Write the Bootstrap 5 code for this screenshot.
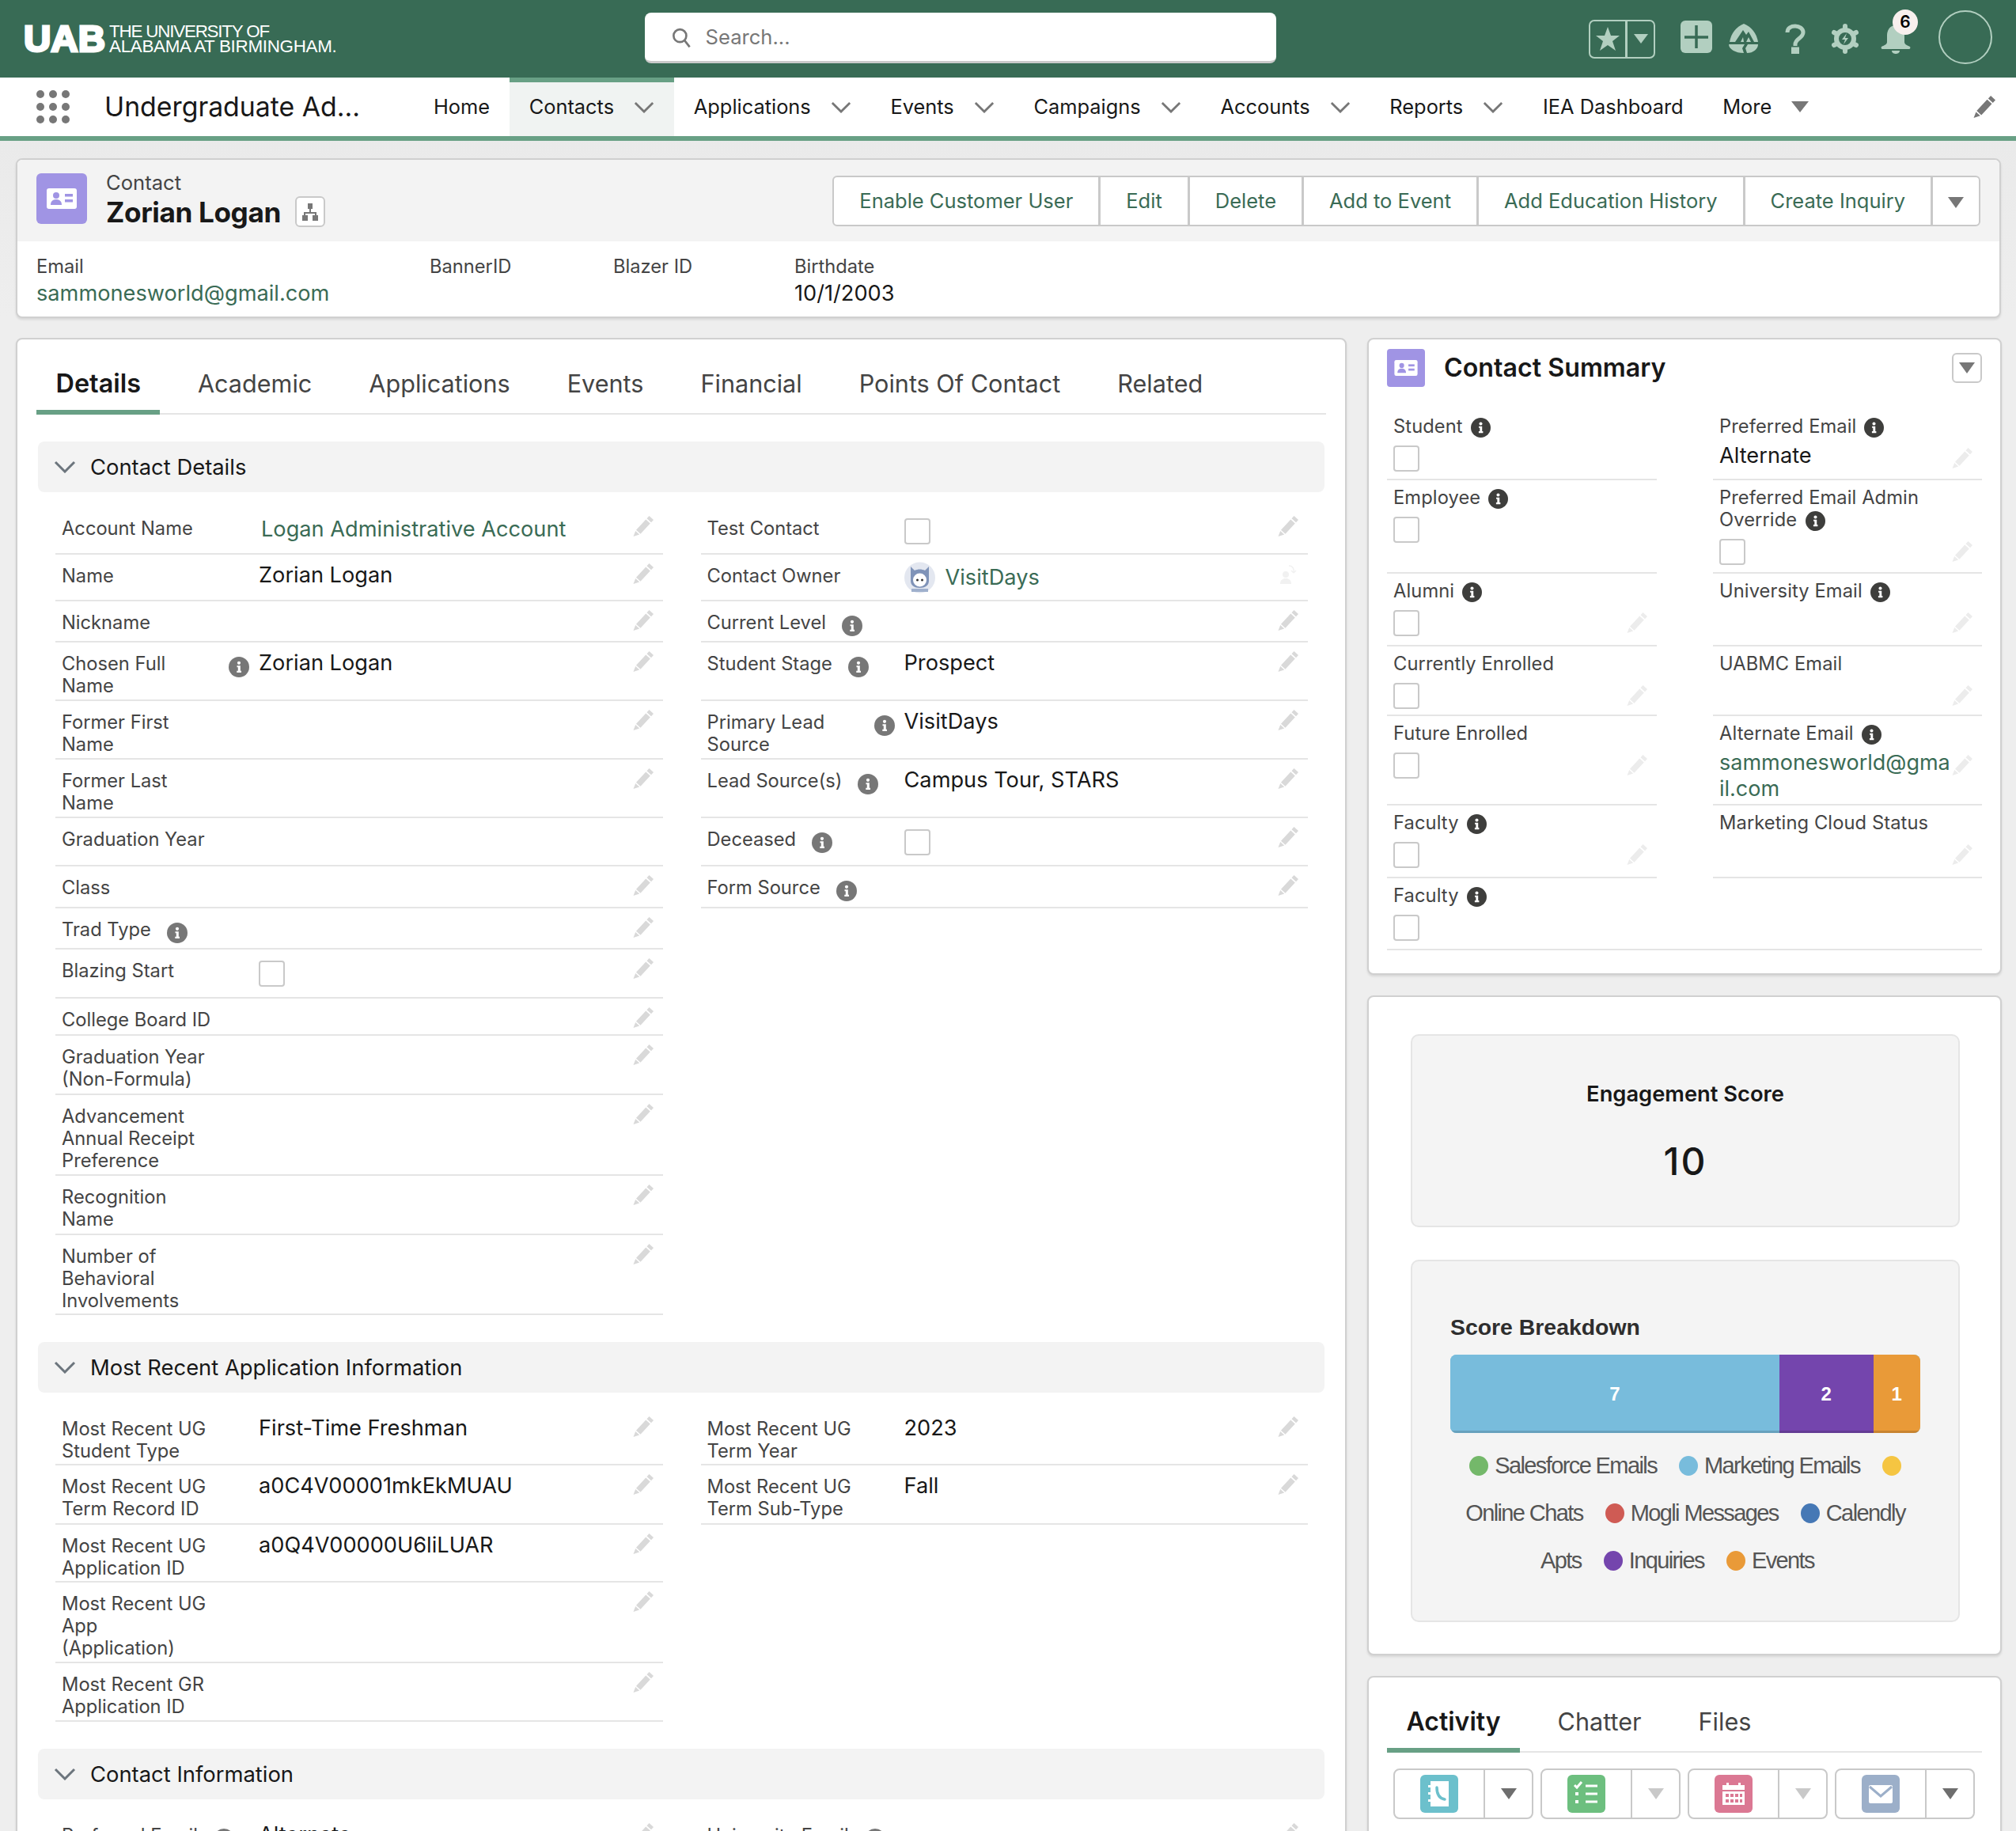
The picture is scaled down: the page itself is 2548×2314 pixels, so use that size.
<!doctype html>
<html lang="en">
<head>
<meta charset="utf-8">
<title>Zorian Logan | Contact</title>
<link href="https://cdn.jsdelivr.net/npm/bootstrap@5.3.0/dist/css/bootstrap.min.css" rel="stylesheet">
<style>
html,body{height:100vh;overflow:hidden}
body{font-family:Inter,"Liberation Sans",sans-serif;font-size:23.7px;line-height:28px;color:#181818;background:linear-gradient(#d6d6d6 0,#e8e8e8 60px,#eeeeee 400px)}
a{color:#3a6b55;text-decoration:none}
.topbar{height:98px;background:#386b55;padding:0 30px 0 0}
.logo-mark{margin-left:29px;width:106px;height:38px;flex:none;overflow:visible}
.logo-text{color:#fff;font-family:"Liberation Sans",sans-serif;font-size:22.4px;line-height:19.5px;margin-left:3px;width:677px;letter-spacing:-.3px}
.logo-text span{letter-spacing:-1.2px}
.srch{width:798px;height:64px;background:#fff;border-radius:8px;border:2px solid #c9c9c9;border-width:0 0 3px;padding:3px 0 0 34px;gap:18px;margin-bottom:3px}
.srch input{border:0;padding:0;font-size:25.6px;box-shadow:none!important;background:transparent}
.srch input::placeholder{color:#777}
.tools{margin-left:auto;height:98px}
.fav{width:84px;height:49px;border:2px solid #b2cfc0;border-radius:7px;margin-right:32px}
.fav>span{height:100%}
.fav>span:first-child{width:47px;border-right:3px solid #b2cfc0}
.fav>span:last-child{flex:1}
.plusb{margin:0 21px 5px 0}
.qmark{margin:0 33px}
.bellwrap{position:relative;width:38px;height:38px;margin:0 35px 0 28px}
.notif{position:absolute;left:15px;top:-18px;width:32px;height:32px;border-radius:50%;background:#f8f0ee;color:#000;font-weight:600;font-size:21px;line-height:32px;text-align:center}
.avat{width:68px;height:68px;border:2px solid #b2cfc0;border-radius:50%;flex:none;margin-bottom:4px}
.appbar{height:80px;background:#fff;border-bottom:6px solid #68a085}
.waffle{margin-left:46px;width:42px;display:grid;grid-template-columns:repeat(3,10px);gap:6px;flex:none}
.waffle i{width:10px;height:10px;border-radius:50%;background:#777;display:block}
.apptitle{margin-left:44px;width:391px;font-size:33.8px;line-height:44px;flex:none;white-space:nowrap}
.appnav .nav-link{color:#181818;font-size:25.4px;line-height:28px;height:74px;padding:0 24.5px 0 25px;display:flex;align-items:center;gap:25.2px;white-space:nowrap}
.appnav .nav-link svg{color:#777}
.appnav .nav-link.on{background:#f0f3f2;border-top:6px solid #68a085;padding-bottom:6px}
.apppen{margin-left:auto;margin-right:26px;color:#777}
.shell{padding:22px 19px 0 20px}
.hcard,.ccard{background:#fff;border:2px solid #d0d0d0;border-radius:8px;box-shadow:0 2px 3px rgba(0,0,0,.1)}
.hhead{height:103px;background:#f3f3f3;border-radius:6px 6px 0 0;padding:0 24px}
.tile{width:64px;height:64px;background:#a094e4;border-radius:6px;flex:none}
.hhead .tile{margin-top:-6px}
.tile.sm{width:48px;height:48px;border-radius:4px}
.objname{margin-left:24px}
.objname small{font-size:25.6px;line-height:30px;color:#444;display:block;margin-top:-2px}
.objname strong{font-size:35.2px;line-height:42px;font-weight:700;letter-spacing:-.4px;display:block;margin-top:1px}
.hier{width:38px;height:39px;border:2px solid #c9c9c9;border-radius:6px;background:#fff;margin-left:18px}
.acts .btn{height:64px;background:#fff;border:2px solid #c9c9c9;color:#3a6b55;font-size:25.5px;line-height:28px;padding:0 32px;white-space:nowrap}
.acts .btn.car{width:62px;padding:0}
.hbody{padding:16px 24px 0;height:95px}
.hf{font-size:23.7px;line-height:32px;color:#444}
.hf b{display:block;font-weight:400;font-size:27.2px;line-height:36px;color:#181818;white-space:nowrap}
.hf.f1{width:497px}.hf.f2{width:232px}.hf.f3{width:229px}
.cols{display:grid;grid-template-columns:1682px 802px;column-gap:26px;margin-top:25px}
.ccard{padding:22px 24px 0}
aside .ccard{padding-left:23px;padding-right:23px}
.tabsx{border-bottom:2px solid #e5e5e5;gap:23px;flex-wrap:nowrap}
.tabsx .nav-link{color:#444;font-size:30.6px;line-height:40px;padding:14px 24.5px 13px;border-bottom:6px solid transparent;margin-bottom:-2px;white-space:nowrap}
.tabsx .nav-link.on{color:#181818;font-weight:600;font-size:32.4px;border-bottom-color:#68a085}
.actv .tabsx .nav-link.on{font-size:32px}
.sect{height:64px;background:#f3f3f3;border-radius:8px;margin:34px 2px 19px;padding-left:20px;gap:18px;font-size:27.4px}
.fields{padding:0 23px 0 24px}
.fld{display:flex;padding:12px 12px 0 8px;border-bottom:2px solid #e5e5e5}
.flab{width:249px;flex:none;display:flex;gap:20px;color:#444;white-space:nowrap;margin-top:1px}
.flab .w2{width:191px;flex:none}
.fval{flex:1;font-size:27.2px;line-height:28px;white-space:nowrap}
.fval.lk{padding:2px 0 0 3px}
.ownr{display:flex;align-items:center;gap:13px;margin-top:-3px;height:40px}
.cbx{display:block;width:33px;height:33px;border:2px solid #c9c9c9;border-radius:4px;background:#fff;margin-top:2px}
.pen{width:26px;height:26px;color:#d9d9d9;flex:none;margin-top:-1px}
.inf{width:26px;height:26px;flex:none;color:#777;margin-top:5px}
.h47{height:47px}.h52{height:52px}.h53{height:53px}.h59{height:59px}.h60{height:60px}.h61{height:61px}.h62{height:62px}.h73{height:73px}.h74{height:74px}.h75{height:75px}.h102{height:102px}.h101{height:101px}
.sumhead{padding:0;height:58px;margin-top:-15px}
.sumhead h2{font-size:32.2px;line-height:40px;font-weight:600;margin:0 0 0 24px}
.minib{width:38px;height:38px;border:2px solid #c9c9c9;border-radius:6px;background:#fff;margin-left:auto;padding:0}
.sgrid{display:grid;grid-template-columns:341px 340px;column-gap:71px;grid-template-rows:90px 118px 92px 88px 113px 92px 91px;margin-top:23px;padding-bottom:29px}
.scell{border-bottom:2px solid #e5e5e5;padding:8px 12px 0 8px;color:#444;letter-spacing:.1px}
.scell.wide{grid-column:1/-1}
.slab{display:flex;align-items:flex-start;gap:10px}
.slab .inf{color:#3e3e3c;margin-top:3px;width:25px;height:25px}
.sline{display:flex;justify-content:space-between;align-items:flex-start;margin-top:10px;min-height:33px}
.sline .cbx{margin:0}
.sline .pen{color:#ececec;margin-top:3px}
.sval{font-size:27.2px;line-height:33px;color:#181818;margin-top:-4px;letter-spacing:0}
.sval a{display:block;width:294px;font-size:27px;word-break:break-all}
.engage{height:834px;margin-top:26px;padding:47px 51px 0 53px}
aside .engage{padding:47px 51px 0 53px}
.ebox{background:#f4f4f4;border:2px solid #e5e5e5;border-radius:10px}
.ebox.a{height:244px;text-align:center;padding-top:57px}
.ebox.a h3{font-size:27.3px;line-height:34px;font-weight:600;margin:0}
.ebox.a div{font-size:48px;line-height:56px;font-weight:500;margin-top:40px;letter-spacing:2px}
.ebox.b{height:458px;margin-top:41px;padding:65px 48px 0;font-family:"Liberation Sans",sans-serif}
.ebox.b h3{font-size:28.4px;line-height:36px;font-weight:700;color:#2e2e2e;margin:0 0 17px}
.sbar{height:99px;border-radius:8px;font-size:24px;background:#78bcdc;margin-bottom:11px}
.sbar .progress-bar{font-weight:700;color:#fff;overflow:visible;box-shadow:inset 0 -3px rgba(0,0,0,.14)}
.lgd{height:60px;font-size:29px;letter-spacing:-1.6px;color:#555;font-weight:400;gap:28px;white-space:nowrap}
.lgd.last{padding-right:20px}
.lgd span{display:flex;align-items:center;gap:8px}
.lgd i{width:24px;height:25px;border-radius:50%;display:block;flex:none}
.actv{margin-top:26px;height:400px}
.abtns{gap:9px;margin:20px 0 0 8px}
.agrp{width:177px;height:64px;border:2px solid #c9c9c9;border-radius:8px}
.agrp>span:first-child{width:114px;height:100%;border-right:2px solid #c9c9c9}
.agrp>span:last-child{flex:1}
</style>
</head>
<body>
<svg width="0" height="0" class="position-absolute">
  <symbol id="pen" viewBox="0 0 26 26"><path fill="currentColor" d="M20.5 0 26 5 23 8.300 17.500 3.300ZM16.300 4.500 21.800 9.500 9.500 22.700 4 17.700ZM3.200 19 8.200 23.500 .5 26Z"/></symbol>
  <symbol id="inf" viewBox="0 0 26 26"><circle cx="13" cy="13" r="13" fill="currentColor"/><circle cx="13" cy="7.800" r="2.100" fill="#fff"/><path fill="#fff" d="M10.500 11.200H14.800V17.800H16V20H10.300V17.800H11.800V13.300H10.500Z"/></symbol>
  <symbol id="chev" viewBox="0 0 28 16"><path d="M2 2 14 14 26 2" fill="none" stroke="currentColor" stroke-width="3"/></symbol>
  <symbol id="card" viewBox="0 0 38 26"><rect width="38" height="26" rx="3" fill="#fff"/><circle cx="12" cy="9" r="4" fill="#a094e4"/><path d="M5 21c0-5 3-7 7-7s7 2 7 7Z" fill="#a094e4"/><rect x="23" y="7" width="10" height="3.500" fill="#a094e4"/><rect x="23" y="14" width="10" height="3.500" fill="#a094e4"/></symbol>
</svg>

<header class="topbar d-flex align-items-center">
  <svg class="logo-mark" viewBox="0 0 106 38" role="img" aria-label="UAB"><text x="1" y="35" font-family="Liberation Sans" font-weight="700" font-size="47" fill="#fff" stroke="#fff" stroke-width="3" textLength="103" lengthAdjust="spacingAndGlyphs">UAB</text></svg>
  <div class="logo-text"><span>THE UNIVERSITY OF</span><br>ALABAMA AT BIRMINGHAM.</div>
  <div class="srch d-flex align-items-center">
    <svg width="26" height="28" viewBox="0 0 26 28" fill="none" stroke="#777" stroke-width="2.800"><circle cx="11" cy="11" r="8.500"/><path d="M17 17 24 26"/></svg>
    <input class="form-control" type="text" placeholder="Search...">
  </div>
  <div class="tools d-flex align-items-center">
    <div class="fav d-flex">
      <span class="d-flex align-items-center justify-content-center"><svg width="32" height="32" viewBox="0 0 32 32"><path fill="#b2cfc0" d="M16 1 20 12 31 12 22 19 26 31 16 24 6 31 10 19 1 12 12 12Z"/></svg></span>
      <span class="d-flex align-items-center justify-content-center"><svg width="18" height="12" viewBox="0 0 18 12"><path fill="#b2cfc0" d="M0 0H18L9 12Z"/></svg></span>
    </div>
    <svg width="40" height="41" viewBox="0 0 40 41" class="plusb"><rect width="40" height="41" rx="6" fill="#b2cfc0"/><path d="M20 6V35M5 21H35" stroke="#386b55" stroke-width="3.500"/></svg>
    <svg width="38" height="38" viewBox="0 0 38 38"><path fill="#b2cfc0" d="M19 0C9 4 3 12 1 23H37C35 12 29 4 19 0Z"/><path fill="#386b55" d="M8 23 18 8 22 14 25 10 32 23H28L25 17 22 23H19L18 17 15 23Z"/><path fill="#b2cfc0" d="M0 26H37C37 32 31 37 23 37L21 31 24 26H20L17 31 19 37C8 37 0 32 0 26Z"/></svg>
    <svg width="26" height="38" viewBox="0 0 26 38" class="qmark" fill="none" stroke="#b2cfc0" stroke-width="5"><path d="M3 11C3 5 8 3 13 3s10 3 10 8c0 7-10 8-10 15v2"/><rect x="10.500" y="32" width="5" height="4" fill="#b2cfc0"/></svg>
    <svg width="34" height="38" viewBox="0 0 34 38" fill="none" stroke="#b2cfc0"><circle cx="17" cy="19" r="11" stroke-width="6"/><path stroke-width="6" stroke-linecap="round" d="M17 3V5M17 33V35M3 11 5 12M29 26 31 27M3 27 5 26M29 12 31 11"/><path fill="#b2cfc0" stroke="none" d="M19 12 13 20H17L15 26 21 18H17Z"/></svg>
    <div class="bellwrap">
      <svg width="38" height="38" viewBox="0 0 38 38"><path fill="#b2cfc0" d="M19 2C11 2 8 9 8 15V23C8 26 5 27 1 29 0 30 1 32 2 32H36C37 32 38 30 37 29 33 27 30 26 30 23V15C30 9 27 2 19 2Z"/><path fill="#b2cfc0" d="M14 34H24C24 37 21 38 19 38S14 37 14 34Z"/></svg>
      <span class="notif">6</span>
    </div>
    <span class="avat"></span>
  </div>
</header>

<nav class="appbar d-flex align-items-center">
  <div class="waffle"><i></i><i></i><i></i><i></i><i></i><i></i><i></i><i></i><i></i></div>
  <div class="apptitle">Undergraduate Ad...</div>
  <ul class="nav appnav flex-nowrap">
    <li class="nav-item"><a class="nav-link" href="#">Home</a></li>
    <li class="nav-item"><a class="nav-link on" href="#">Contacts <svg width="26" height="15"><use href="#chev"/></svg></a></li>
    <li class="nav-item"><a class="nav-link" href="#">Applications <svg width="26" height="15"><use href="#chev"/></svg></a></li>
    <li class="nav-item"><a class="nav-link" href="#">Events <svg width="26" height="15"><use href="#chev"/></svg></a></li>
    <li class="nav-item"><a class="nav-link" href="#">Campaigns <svg width="26" height="15"><use href="#chev"/></svg></a></li>
    <li class="nav-item"><a class="nav-link" href="#">Accounts <svg width="26" height="15"><use href="#chev"/></svg></a></li>
    <li class="nav-item"><a class="nav-link" href="#">Reports <svg width="26" height="15"><use href="#chev"/></svg></a></li>
    <li class="nav-item"><a class="nav-link" href="#">IEA Dashboard</a></li>
    <li class="nav-item"><a class="nav-link" href="#">More <svg width="22" height="14" viewBox="0 0 22 14"><path fill="#777" d="M0 0H22L11 14Z"/></svg></a></li>
  </ul>
  <svg class="apppen" width="28" height="28"><use href="#pen"/></svg>
</nav>

<main class="shell">
  <section class="hcard">
    <div class="hhead d-flex align-items-center">
      <span class="tile d-flex align-items-center justify-content-center"><svg width="38" height="26"><use href="#card"/></svg></span>
      <div class="objname">
        <small>Contact</small>
        <div class="d-flex align-items-center"><strong>Zorian Logan</strong>
          <span class="hier d-flex align-items-center justify-content-center"><svg width="22" height="24" viewBox="0 0 22 24" fill="#777"><rect x="8" y="1" width="6" height="7"/><path d="M10 8H12V12H19V16H17V14H5V16H3V12H10Z"/><rect x="1" y="16" width="7" height="7"/><rect x="14" y="16" width="7" height="7"/></svg></span>
        </div>
      </div>
      <div class="btn-group acts ms-auto" role="group">
        <button class="btn" type="button">Enable Customer User</button>
        <button class="btn" type="button">Edit</button>
        <button class="btn" type="button">Delete</button>
        <button class="btn" type="button">Add to Event</button>
        <button class="btn" type="button">Add Education History</button>
        <button class="btn" type="button">Create Inquiry</button>
        <button class="btn car" type="button" aria-label="More actions"><svg width="20" height="14" viewBox="0 0 20 14"><path fill="#777" d="M0 0H20L10 14Z"/></svg></button>
      </div>
    </div>
    <div class="hbody d-flex">
      <div class="hf f1">Email<b><a href="#">sammonesworld@gmail.com</a></b></div>
      <div class="hf f2">BannerID</div>
      <div class="hf f3">Blazer ID</div>
      <div class="hf">Birthdate<b>10/1/2003</b></div>
    </div>
  </section>

  <div class="cols">
    <section class="ccard">
      <ul class="nav tabsx">
        <li class="nav-item"><a class="nav-link on" href="#">Details</a></li>
        <li class="nav-item"><a class="nav-link" href="#">Academic</a></li>
        <li class="nav-item"><a class="nav-link" href="#">Applications</a></li>
        <li class="nav-item"><a class="nav-link" href="#">Events</a></li>
        <li class="nav-item"><a class="nav-link" href="#">Financial</a></li>
        <li class="nav-item"><a class="nav-link" href="#">Points Of Contact</a></li>
        <li class="nav-item"><a class="nav-link" href="#">Related</a></li>
      </ul>

      <div class="sect d-flex align-items-center"><svg width="28" height="16" class="text-secondary"><use href="#chev"/></svg>Contact Details</div>
      <div class="fields"><div class="row gx-5">
        <div class="col-6">
          <div class="fld h60"><div class="flab">Account Name</div><div class="fval lk"><a href="#">Logan Administrative Account</a></div><svg class="pen"><use href="#pen"/></svg></div>
          <div class="fld h59"><div class="flab">Name</div><div class="fval">Zorian Logan</div><svg class="pen"><use href="#pen"/></svg></div>
          <div class="fld h52"><div class="flab">Nickname</div><div class="fval"></div><svg class="pen"><use href="#pen"/></svg></div>
          <div class="fld h74"><div class="flab"><span class="w2">Chosen Full<br>Name</span><svg class="inf"><use href="#inf"/></svg></div><div class="fval">Zorian Logan</div><svg class="pen"><use href="#pen"/></svg></div>
          <div class="fld h74"><div class="flab">Former First<br>Name</div><div class="fval"></div><svg class="pen"><use href="#pen"/></svg></div>
          <div class="fld h74"><div class="flab">Former Last<br>Name</div><div class="fval"></div><svg class="pen"><use href="#pen"/></svg></div>
          <div class="fld h61"><div class="flab">Graduation Year</div><div class="fval"></div></div>
          <div class="fld h53"><div class="flab">Class</div><div class="fval"></div><svg class="pen"><use href="#pen"/></svg></div>
          <div class="fld h52"><div class="flab">Trad Type<svg class="inf"><use href="#inf"/></svg></div><div class="fval"></div><svg class="pen"><use href="#pen"/></svg></div>
          <div class="fld h62"><div class="flab">Blazing Start</div><div class="fval"><span class="cbx"></span></div><svg class="pen"><use href="#pen"/></svg></div>
          <div class="fld h47"><div class="flab">College Board ID</div><div class="fval"></div><svg class="pen"><use href="#pen"/></svg></div>
          <div class="fld h75"><div class="flab">Graduation Year<br>(Non-Formula)</div><div class="fval"></div><svg class="pen"><use href="#pen"/></svg></div>
          <div class="fld h102"><div class="flab">Advancement<br>Annual Receipt<br>Preference</div><div class="fval"></div><svg class="pen"><use href="#pen"/></svg></div>
          <div class="fld h75"><div class="flab">Recognition<br>Name</div><div class="fval"></div><svg class="pen"><use href="#pen"/></svg></div>
          <div class="fld h101"><div class="flab">Number of<br>Behavioral<br>Involvements</div><div class="fval"></div><svg class="pen"><use href="#pen"/></svg></div>
        </div>
        <div class="col-6">
          <div class="fld h60"><div class="flab">Test Contact</div><div class="fval"><span class="cbx"></span></div><svg class="pen"><use href="#pen"/></svg></div>
          <div class="fld h59"><div class="flab">Contact Owner</div><div class="fval ownr"><svg width="39" height="40" viewBox="0 0 39 40"><circle cx="19.500" cy="20" r="19.500" fill="#e3e7f0"/><path fill="#7f93b8" d="M8 6 13 11C17 9 22 9 26 11L31 6V24C31 30 26 33 19.500 33S8 30 8 24Z"/><circle cx="19.500" cy="23" r="8.500" fill="#fff"/><circle cx="16.500" cy="23" r="1.500" fill="#333"/><circle cx="22.500" cy="23" r="1.500" fill="#333"/><path fill="#9fb0cd" d="M9 34H30V38H9Z"/></svg><a href="#">VisitDays</a></div><svg class="pen" viewBox="0 0 26 26"><circle cx="10" cy="14" r="4" fill="#f1f1f1"/><path d="M3 26c0-5 3-7 7-7s7 2 7 7Z" fill="#f1f1f1"/><path d="M14 3c5 0 7 4 6 9M20 12l-3-3M20 12l3-3" fill="none" stroke="#f1f1f1" stroke-width="1.500"/></svg></div>
          <div class="fld h52"><div class="flab">Current Level<svg class="inf"><use href="#inf"/></svg></div><div class="fval"></div><svg class="pen"><use href="#pen"/></svg></div>
          <div class="fld h74"><div class="flab">Student Stage<svg class="inf"><use href="#inf"/></svg></div><div class="fval">Prospect</div><svg class="pen"><use href="#pen"/></svg></div>
          <div class="fld h74"><div class="flab"><span class="w2">Primary Lead<br>Source</span><svg class="inf"><use href="#inf"/></svg></div><div class="fval">VisitDays</div><svg class="pen"><use href="#pen"/></svg></div>
          <div class="fld h74"><div class="flab">Lead Source(s)<svg class="inf"><use href="#inf"/></svg></div><div class="fval">Campus Tour, STARS</div><svg class="pen"><use href="#pen"/></svg></div>
          <div class="fld h61"><div class="flab">Deceased<svg class="inf"><use href="#inf"/></svg></div><div class="fval"><span class="cbx"></span></div><svg class="pen"><use href="#pen"/></svg></div>
          <div class="fld h53"><div class="flab">Form Source<svg class="inf"><use href="#inf"/></svg></div><div class="fval"></div><svg class="pen"><use href="#pen"/></svg></div>
        </div>
      </div></div>

      <div class="sect d-flex align-items-center"><svg width="28" height="16" class="text-secondary"><use href="#chev"/></svg>Most Recent Application Information</div>
      <div class="fields"><div class="row gx-5">
        <div class="col-6">
          <div class="fld h73"><div class="flab">Most Recent UG<br>Student Type</div><div class="fval">First-Time Freshman</div><svg class="pen"><use href="#pen"/></svg></div>
          <div class="fld h75"><div class="flab">Most Recent UG<br>Term Record ID</div><div class="fval">a0C4V00001mkEkMUAU</div><svg class="pen"><use href="#pen"/></svg></div>
          <div class="fld h73"><div class="flab">Most Recent UG<br>Application ID</div><div class="fval">a0Q4V00000U6liLUAR</div><svg class="pen"><use href="#pen"/></svg></div>
          <div class="fld h102"><div class="flab">Most Recent UG<br>App<br>(Application)</div><div class="fval"></div><svg class="pen"><use href="#pen"/></svg></div>
          <div class="fld h74"><div class="flab">Most Recent GR<br>Application ID</div><div class="fval"></div><svg class="pen"><use href="#pen"/></svg></div>
        </div>
        <div class="col-6">
          <div class="fld h73"><div class="flab">Most Recent UG<br>Term Year</div><div class="fval">2023</div><svg class="pen"><use href="#pen"/></svg></div>
          <div class="fld h75"><div class="flab">Most Recent UG<br>Term Sub-Type</div><div class="fval">Fall</div><svg class="pen"><use href="#pen"/></svg></div>
        </div>
      </div></div>

      <div class="sect d-flex align-items-center"><svg width="28" height="16" class="text-secondary"><use href="#chev"/></svg>Contact Information</div>
      <div class="fields"><div class="row gx-5">
        <div class="col-6">
          <div class="fld h74"><div class="flab">Preferred Email<svg class="inf"><use href="#inf"/></svg></div><div class="fval">Alternate</div><svg class="pen"><use href="#pen"/></svg></div>
        </div>
        <div class="col-6">
          <div class="fld h74"><div class="flab">University Email<svg class="inf"><use href="#inf"/></svg></div><div class="fval"></div><svg class="pen"><use href="#pen"/></svg></div>
        </div>
      </div></div>
    </section>

    <aside>
      <section class="ccard">
        <div class="sumhead d-flex align-items-center">
          <span class="tile sm d-flex align-items-center justify-content-center"><svg width="30" height="20"><use href="#card"/></svg></span>
          <h2>Contact Summary</h2>
          <button class="minib d-flex align-items-center justify-content-center" type="button" aria-label="Menu"><svg width="20" height="14" viewBox="0 0 20 14"><path fill="#777" d="M0 0H20L10 14Z"/></svg></button>
        </div>
        <div class="sgrid">
          <div class="scell"><div class="slab">Student<svg class="inf"><use href="#inf"/></svg></div><div class="sline"><span class="cbx"></span></div></div>
          <div class="scell"><div class="slab">Preferred Email<svg class="inf"><use href="#inf"/></svg></div><div class="sline"><div class="sval">Alternate</div><svg class="pen"><use href="#pen"/></svg></div></div>
          <div class="scell"><div class="slab">Employee<svg class="inf"><use href="#inf"/></svg></div><div class="sline"><span class="cbx"></span></div></div>
          <div class="scell"><div class="slab d-block">Preferred Email Admin<br>Override <svg class="inf align-top ms-1"><use href="#inf"/></svg></div><div class="sline"><span class="cbx"></span><svg class="pen"><use href="#pen"/></svg></div></div>
          <div class="scell"><div class="slab">Alumni<svg class="inf"><use href="#inf"/></svg></div><div class="sline"><span class="cbx"></span><svg class="pen"><use href="#pen"/></svg></div></div>
          <div class="scell"><div class="slab">University Email<svg class="inf"><use href="#inf"/></svg></div><div class="sline justify-content-end"><svg class="pen"><use href="#pen"/></svg></div></div>
          <div class="scell"><div class="slab">Currently Enrolled</div><div class="sline"><span class="cbx"></span><svg class="pen"><use href="#pen"/></svg></div></div>
          <div class="scell"><div class="slab">UABMC Email</div><div class="sline justify-content-end"><svg class="pen"><use href="#pen"/></svg></div></div>
          <div class="scell"><div class="slab">Future Enrolled</div><div class="sline"><span class="cbx"></span><svg class="pen"><use href="#pen"/></svg></div></div>
          <div class="scell"><div class="slab">Alternate Email<svg class="inf"><use href="#inf"/></svg></div><div class="sline"><div class="sval"><a href="#">sammonesworld@gmail.com</a></div><svg class="pen"><use href="#pen"/></svg></div></div>
          <div class="scell"><div class="slab">Faculty<svg class="inf"><use href="#inf"/></svg></div><div class="sline"><span class="cbx"></span><svg class="pen"><use href="#pen"/></svg></div></div>
          <div class="scell"><div class="slab">Marketing Cloud Status</div><div class="sline justify-content-end"><svg class="pen"><use href="#pen"/></svg></div></div>
          <div class="scell wide"><div class="slab">Faculty<svg class="inf"><use href="#inf"/></svg></div><div class="sline"><span class="cbx"></span></div></div>
        </div>
      </section>

      <section class="ccard engage">
        <div class="ebox a"><h3>Engagement Score</h3><div>10</div></div>
        <div class="ebox b">
          <h3>Score Breakdown</h3>
          <div class="progress sbar">
            <div class="progress-bar" style="width:70%;background:#78bcdc">7</div>
            <div class="progress-bar" style="width:20%;background:#7445ad">2</div>
            <div class="progress-bar" style="width:10%;background:#e99a38">1</div>
          </div>
          <div class="lgd d-flex justify-content-center align-items-center"><span><i style="background:#74b86a"></i>Salesforce Emails</span><span><i style="background:#78bcdc"></i>Marketing Emails</span><i style="background:#f5c542"></i></div>
          <div class="lgd d-flex justify-content-center align-items-center"><span>Online Chats</span><span><i style="background:#cf5b54"></i>Mogli Messages</span><span><i style="background:#4678b5"></i>Calendly</span></div>
          <div class="lgd last d-flex justify-content-center align-items-center"><span>Apts</span><span><i style="background:#7445ad"></i>Inquiries</span><span><i style="background:#e99a38"></i>Events</span></div>
        </div>
      </section>

      <section class="ccard actv">
        <ul class="nav tabsx">
          <li class="nav-item"><a class="nav-link on" href="#">Activity</a></li>
          <li class="nav-item"><a class="nav-link" href="#">Chatter</a></li>
          <li class="nav-item"><a class="nav-link" href="#">Files</a></li>
        </ul>
        <div class="abtns d-flex">
          <div class="agrp d-flex">
            <span class="d-flex align-items-center justify-content-center"><svg width="48" height="48" viewBox="0 0 48 48"><rect width="48" height="48" rx="6" fill="#6cc0cc"/><path fill="#fff" d="M13 8H36V40H13V34H10V31H13V25H10V22H13V16H10V13H13Z"/><path fill="none" stroke="#6cc0cc" stroke-width="3.500" stroke-linecap="round" d="M21 16C21 25 25 30 31 31"/></svg></span>
            <span class="d-flex align-items-center justify-content-center"><svg width="20" height="14" viewBox="0 0 20 14"><path fill="#6e6e6e" d="M0 0H20L10 14Z"/></svg></span>
          </div>
          <div class="agrp d-flex">
            <span class="d-flex align-items-center justify-content-center"><svg width="48" height="48" viewBox="0 0 48 48"><rect width="48" height="48" rx="6" fill="#6dbf7f"/><path fill="none" stroke="#fff" stroke-width="3" d="M9 13 12 16 18 9M23 14H38M23 24H38M23 34H38"/><rect x="10" y="22" width="4" height="4" fill="#fff"/><rect x="10" y="32" width="4" height="4" fill="#fff"/></svg></span>
            <span class="d-flex align-items-center justify-content-center"><svg width="20" height="14" viewBox="0 0 20 14"><path fill="#c9c9c9" d="M0 0H20L10 14Z"/></svg></span>
          </div>
          <div class="agrp d-flex">
            <span class="d-flex align-items-center justify-content-center"><svg width="48" height="48" viewBox="0 0 48 48"><rect width="48" height="48" rx="6" fill="#db7893"/><path fill="#fff" d="M10 13H15V10H18V13H30V10H33V13H38V19H10ZM10 21H38V38H10Z"/><g fill="#db7893"><rect x="14" y="24" width="4" height="4"/><rect x="20" y="24" width="4" height="4"/><rect x="26" y="24" width="4" height="4"/><rect x="32" y="24" width="3" height="4"/><rect x="14" y="31" width="4" height="4"/><rect x="20" y="31" width="4" height="4"/><rect x="26" y="31" width="4" height="4"/><rect x="32" y="31" width="3" height="4"/></g></svg></span>
            <span class="d-flex align-items-center justify-content-center"><svg width="20" height="14" viewBox="0 0 20 14"><path fill="#c9c9c9" d="M0 0H20L10 14Z"/></svg></span>
          </div>
          <div class="agrp d-flex">
            <span class="d-flex align-items-center justify-content-center"><svg width="48" height="48" viewBox="0 0 48 48"><rect width="48" height="48" rx="6" fill="#9cafc9"/><rect x="9" y="13" width="30" height="23" rx="2" fill="#fff"/><path d="M10 15 24 27 38 15" fill="none" stroke="#9cafc9" stroke-width="3"/></svg></span>
            <span class="d-flex align-items-center justify-content-center"><svg width="20" height="14" viewBox="0 0 20 14"><path fill="#6e6e6e" d="M0 0H20L10 14Z"/></svg></span>
          </div>
        </div>
      </section>
    </aside>
  </div>
</main>
<script src="https://cdn.jsdelivr.net/npm/bootstrap@5.3.0/dist/js/bootstrap.bundle.min.js"></script>
</body>
</html>
